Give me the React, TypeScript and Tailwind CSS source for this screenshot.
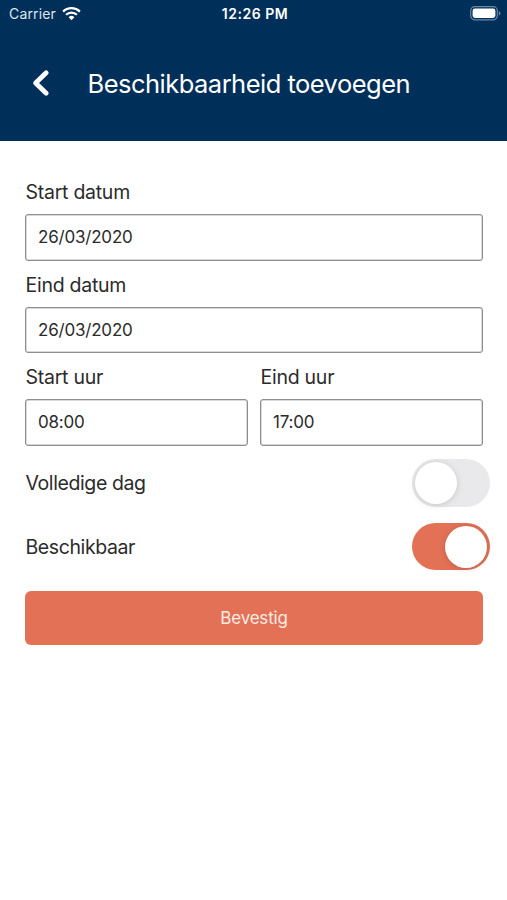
import { useState } from "react"

type FieldProps = {
  label: string
  value: string
}

const Field = ({ label, value }: FieldProps) => {
  const [text, setText] = useState(value)

  return (
    <label className="flex min-w-0 flex-1 flex-col">
      <span className="h-9 pl-[0.5px] text-[19.5px] leading-[29px] tracking-[-0.26px]">{label}</span>
      <input
        type="text"
        value={text}
        onChange={(e) => setText(e.target.value)}
        className="h-[46.5px] w-full rounded-[3px] border border-[#8e8e8e] bg-white px-[12px] text-[17px] tracking-[-0.2px] shadow-[inset_0_0_0_0.5px_#b4b4b4] outline-none"
      />
    </label>
  )
}

type ToggleProps = {
  label: string
  initial: boolean
}

const Toggle = ({ label, initial }: ToggleProps) => {
  const [on, setOn] = useState(initial)

  return (
    <div className="flex h-12 items-center justify-between">
      <span className="pt-0.5 pl-[0.5px] text-[19.5px] tracking-[-0.4px]">{label}</span>
      <button
        role="switch"
        aria-checked={on}
        aria-label={label}
        onClick={() => setOn(!on)}
        className={`-mr-2 flex h-[47.5px] w-[78px] items-center rounded-full px-[3px] ${
          on ? "justify-end bg-[#e27155]" : "justify-start bg-[#e9e9eb]"
        }`}
      >
        <span className="size-[42px] rounded-full bg-white shadow-[0_1px_6px_rgba(0,0,0,0.15)]" />
      </button>
    </div>
  )
}

const StatusBar = () => (
  <div className="grid h-7 grid-cols-3 items-center pr-[6px] pl-[9px] text-[14px]">
    <div className="flex items-center gap-[6px]">
      <span className="-mt-0.5 tracking-[0.15px] text-[#dce6ee]">Carrier</span>
      <svg className="-mt-0.5" width="19" height="15" viewBox="0 0 19 15" fill="none" stroke="white" strokeWidth="2.3">
        <path d="M1.1 5.6a12 12 0 0 1 16.8 0" />
        <path d="M4.1 8.8a7.7 7.7 0 0 1 10.8 0" />
        <path d="M9.5 14.2 6.6 11.3a4.1 4.1 0 0 1 5.8 0Z" fill="white" stroke="none" />
      </svg>
    </div>
    <span className="-mt-0.5 text-center font-semibold tracking-[0.5px]">12:26 PM</span>
    <svg className="-mt-0.5 justify-self-end" width="31" height="15" viewBox="0 0 31 15" fill="none">
      <rect x="0.7" y="0.7" width="26.6" height="13.1" rx="4" stroke="#6a89a3" strokeWidth="1.2" />
      <rect x="2.6" y="2.6" width="22.8" height="9.3" rx="2.3" fill="white" />
      <path d="M28.8 5v4.6c1-.4 1.6-1.3 1.6-2.3s-.6-1.9-1.6-2.3Z" fill="#6a89a3" />
    </svg>
  </div>
)

const App = () => {
  return (
    <div className="min-h-screen bg-white font-['Inter',sans-serif] text-[#2b2b2b]">
      <header className="h-[141px] bg-[#002f59] text-white">
        <StatusBar />
        <div className="flex h-[110px] items-center pl-8">
          <button aria-label="Terug">
            <svg width="18" height="28" viewBox="0 0 18 28" fill="none" stroke="white" strokeWidth="4.8" strokeLinejoin="round">
              <path strokeLinecap="round" d="M14.2 3.8 3.6 14l10.6 10.2" />
            </svg>
          </button>
          <h1 className="mt-0.5 ml-[37.5px] text-[25.5px] tracking-[-0.52px]">Beschikbaarheid toevoegen</h1>
        </div>
      </header>

      <main className="pr-6 pl-[25px] pt-[37px]">
        <div className="flex flex-col gap-[10px]">
          <Field label="Start datum" value="26/03/2020" />
          <Field label="Eind datum" value="26/03/2020" />
          <div className="flex gap-3">
            <Field label="Start uur" value="08:00" />
            <Field label="Eind uur" value="17:00" />
          </div>
        </div>

        <div className="mt-[13.5px] mr-px flex flex-col gap-[15.5px]">
          <Toggle label="Volledige dag" initial={false} />
          <Toggle label="Beschikbaar" initial={true} />
        </div>

        <button className="mt-5 h-[54px] w-full rounded-[6px] bg-[#e27155] pt-0.5 text-[17px] tracking-[-0.2px] text-[#fdece7]">
          Bevestig
        </button>
      </main>
    </div>
  )
}

export default App
